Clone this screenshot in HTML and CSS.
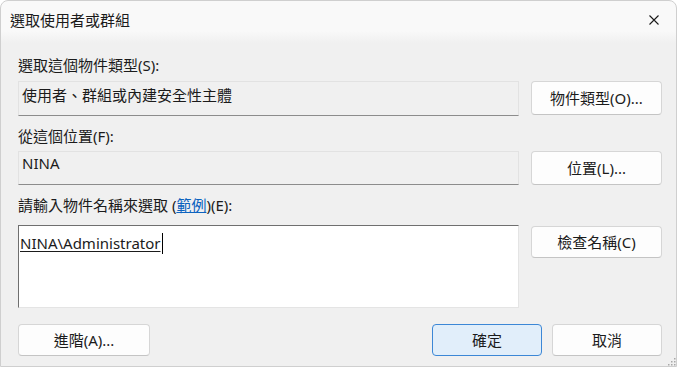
FILE: index.html
```html
<!DOCTYPE html>
<html lang="zh-Hant">
<head>
<meta charset="utf-8">
<title>選取使用者或群組</title>
<link rel="stylesheet" href="styles.css">
</head>
<body>
<div class="window">
  <div class="titlebar">
    <span class="title">選取使用者或群組</span>
    <span class="close" aria-label="關閉">
      <svg width="10" height="10" viewBox="0 0 10 10"><path d="M0.5 0.5 L9.5 9.5 M9.5 0.5 L0.5 9.5" stroke="#1a1a1a" stroke-width="1.1" fill="none"/></svg>
    </span>
  </div>
  <div class="content">
    <div class="section first">
      <div class="label">選取這個物件類型(S):</div>
      <div class="row">
        <div class="field f1">使用者、群組或內建安全性主體</div>
        <button class="btn side">物件類型(O)...</button>
      </div>
    </div>
    <div class="section second">
      <div class="label">從這個位置(F):</div>
      <div class="row">
        <div class="field f2">NINA</div>
        <button class="btn side">位置(L)...</button>
      </div>
    </div>
    <div class="section third">
      <div class="label">請輸入物件名稱來選取 (<a class="link" href="#">範例</a>)(E):</div>
      <div class="row">
        <div class="textarea"><span class="entry">NINA\Administrator</span><span class="caret"></span></div>
        <button class="btn side short">檢查名稱(C)</button>
      </div>
    </div>
    <div class="bottom">
      <button class="btn adv">進階(A)...</button>
      <div class="actions">
        <button class="btn ok">確定</button>
        <button class="btn cancel">取消</button>
      </div>
    </div>
  </div>
  <svg class="grip" width="10" height="10" viewBox="0 0 10 10">
    <rect x="8" y="2" width="1.5" height="1.5" fill="#a8a8a8"/>
    <rect x="5" y="5" width="1.5" height="1.5" fill="#a8a8a8"/>
    <rect x="8" y="5" width="1.5" height="1.5" fill="#a8a8a8"/>
    <rect x="2" y="8" width="1.5" height="1.5" fill="#a8a8a8"/>
    <rect x="5" y="8" width="1.5" height="1.5" fill="#a8a8a8"/>
    <rect x="8" y="8" width="1.5" height="1.5" fill="#a8a8a8"/>
  </svg>
</div>
</body>
</html>
```
FILE: styles.css
```css
html, body {
  margin: 0;
  padding: 0;
  background: #ffffff;
}
body {
  font-family: "Noto Sans", "Noto Sans CJK TC", sans-serif;
  font-size: 15px;
  color: #1b1b1b;
}
.window {
  position: relative;
  box-sizing: border-box;
  width: 677px;
  height: 367px;
  border: 1px solid #cfcfcf;
  border-radius: 8px 8px 0 0;
  background: linear-gradient(#f9f9f9 0, #f9f9f9 30px, #f0f0f0 42px, #f0f0f0 100%);
  overflow: hidden;
}
.titlebar {
  height: 37px;
  display: flex;
  align-items: center;
  justify-content: space-between;
  padding: 0 17px 0 9px;
}
.title {
  font-size: 15px;
  line-height: 20px;
}
.close {
  display: flex;
  width: 10px;
  height: 10px;
}
.content {
  padding: 0 14px 0 17px;
}
.section.first { margin-top: 17px; }
.section.second { margin-top: 10px; }
.section.third { margin-top: 10px; }
.label {
  height: 20px;
  line-height: 20px;
  margin-bottom: 6px;
}
.second .label { margin-bottom: 5px; }
.third .label { margin-bottom: 10px; }
.link {
  color: #0c63bf;
  text-decoration: underline;
}
.row {
  display: flex;
  align-items: flex-start;
  gap: 12px;
}
.field {
  box-sizing: border-box;
  width: 501px;
  background: #f0f0f0;
  border: 1px solid #e2e2e2;
  border-bottom: 1px solid #8c8c8c;
  padding: 3px 3px 0;
  line-height: 20px;
}
.f1 { height: 35px; }
.f2 { height: 34px; padding-top: 1px; }
.textarea {
  box-sizing: border-box;
  width: 501px;
  height: 83px;
  background: #ffffff;
  border: 1px solid #e4e4e4;
  border-top-color: #6f6f6f;
  border-left-color: #6f6f6f;
  padding: 7px 1px 0;
  line-height: 20px;
  display: flex;
  align-items: flex-start;
}
.entry {
  text-decoration: underline;
  text-underline-offset: 2px;
}
.caret {
  display: inline-block;
  width: 1px;
  height: 21px;
  background: #000;
  margin-left: 1px;
  margin-top: 0;
}
.btn {
  box-sizing: border-box;
  font: inherit;
  color: #1b1b1b;
  background: #fdfdfd;
  border: 1px solid #d6d6d6;
  border-bottom-color: #c4c4c4;
  border-radius: 4px;
  padding: 0;
  line-height: 20px;
  text-align: center;
}
.side {
  width: 131px;
  height: 34px;
}
.side.short {
  height: 32px;
  margin-top: 1px;
}
.bottom {
  margin-top: 16px;
  display: flex;
  justify-content: space-between;
  align-items: center;
}
.adv {
  width: 132px;
  height: 32px;
}
.actions {
  display: flex;
  gap: 10px;
}
.ok, .cancel {
  width: 110px;
  height: 32px;
}
.ok {
  background: #e1eefa;
  border: 1px solid #3c87d6;
}
.grip {
  position: absolute;
  right: 0;
  bottom: 0;
}
```
